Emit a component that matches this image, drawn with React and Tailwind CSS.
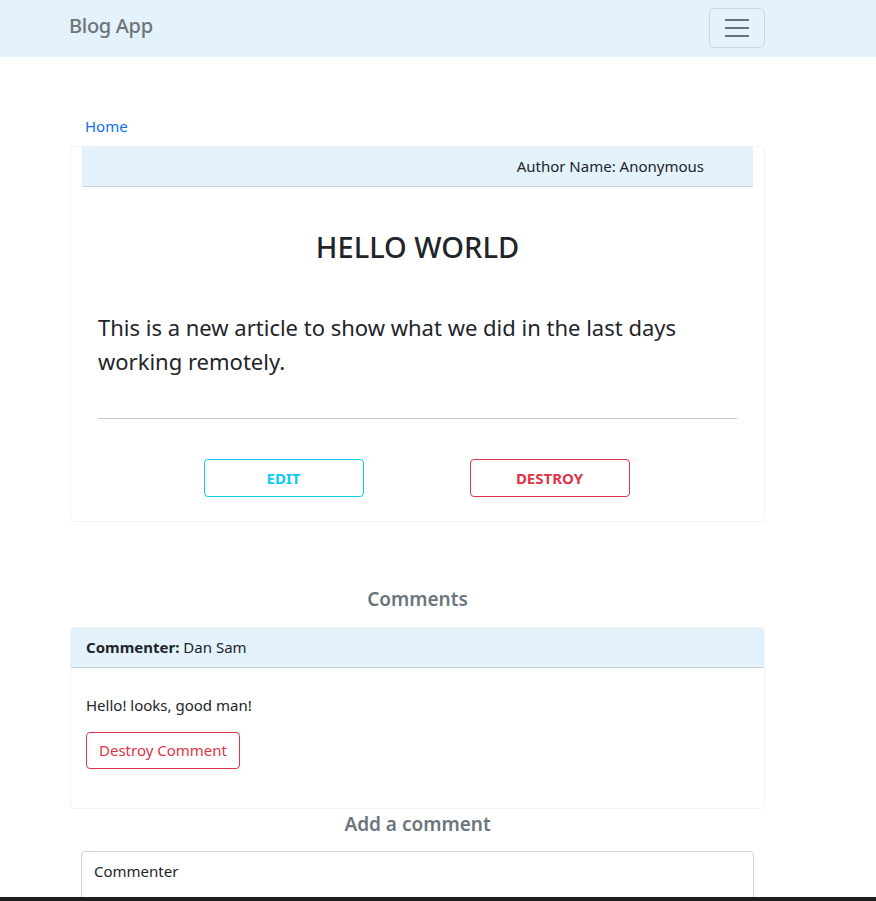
import React from "react";

export default function App() {
  const font = { fontFamily: '"Noto Sans", "Segoe UI", sans-serif' };
  return (
    <div className="min-h-[901px] bg-white text-[#212529]" style={font}>
      <nav className="h-[57px] bg-[#e3f2fd] flex items-center pl-[69px] pr-[111px] justify-between">
        <span className="text-[20px] text-[#6f7479] font-medium tracking-[-0.3px] -mt-[6px]">Blog App</span>
        <button className="w-[56px] h-[40px] -mt-[2px] rounded-[6px] border border-[#cdd5dc] flex flex-col items-center justify-center gap-[6px]">
          <span className="block w-[24px] h-[2px] bg-[#6c7178]" />
          <span className="block w-[24px] h-[2px] bg-[#6c7178]" />
          <span className="block w-[24px] h-[2px] bg-[#6c7178]" />
        </button>
      </nav>

      <div className="w-[695px] ml-[70px]">
        <div className="pt-[57px] pl-[15px] h-[89px]">
          <a className="text-[15px] text-[#0d6efd] leading-[20px]">Home</a>
        </div>

        <div className="border border-[#f3f3f3] rounded-[4px] px-[11px] pb-[24px]">
          <div className="h-[40px] bg-[#e3f2fd] border-b border-[#c7d2dc] flex items-center justify-end pr-[49px] text-[15px]">
            Author Name: Anonymous
          </div>
          <h1 className="text-center text-[29px] font-medium mt-[41px] leading-[38px]">HELLO WORLD</h1>
          <p className="mx-[16px] mt-[44px] text-[22px] leading-[34px] w-[630px]">
            This is a new article to show what we did in the last days working remotely.
          </p>
          <hr className="mx-[16px] mt-[40px] border-t border-[#c8c8c8]" />
          <div className="flex justify-center gap-[106px] mt-[40px] pr-[2px]">
            <button className="w-[160px] h-[38px] border border-[#0dcaf0] rounded-[4px] text-[#0dcaf0] text-[15px] font-bold">EDIT</button>
            <button className="w-[160px] h-[38px] border border-[#dc3545] rounded-[4px] text-[#dc3545] text-[15px] font-bold">DESTROY</button>
          </div>
        </div>

        <h2 className="text-center text-[19px] font-semibold text-[#6c757d] mt-[64px] leading-[26px]">Comments</h2>
        <div className="mt-[15px] border border-[#f3f3f3] rounded-[4px] overflow-hidden">
          <div className="h-[40px] bg-[#e3f2fd] border-b border-[#c7d2dc] flex items-center px-[15px] text-[15px]">
            <b className="font-bold mr-[4px]">Commenter:</b> Dan Sam
          </div>
          <div className="px-[15px] pt-[26px] pb-[39px]">
            <p className="text-[15px] leading-[22px]">Hello! looks, good man!</p>
            <button className="mt-[16px] h-[37px] px-[12px] border border-[#dc3545] rounded-[4px] text-[#dc3545] text-[15px]">Destroy Comment</button>
          </div>
        </div>

        <h2 className="text-center text-[19px] font-semibold text-[#6c757d] mt-[2px] leading-[26px]">Add a comment</h2>
        <div className="mx-[11px] mt-[14px] h-[60px] border border-[#ced4da] rounded-[4px] px-[12px] pt-[8px] text-[15px]">
          Commenter
        </div>
      </div>

      <div className="fixed left-0 right-0 bottom-0 h-[4px] bg-[#1c1c1c]" />
    </div>
  );
}
